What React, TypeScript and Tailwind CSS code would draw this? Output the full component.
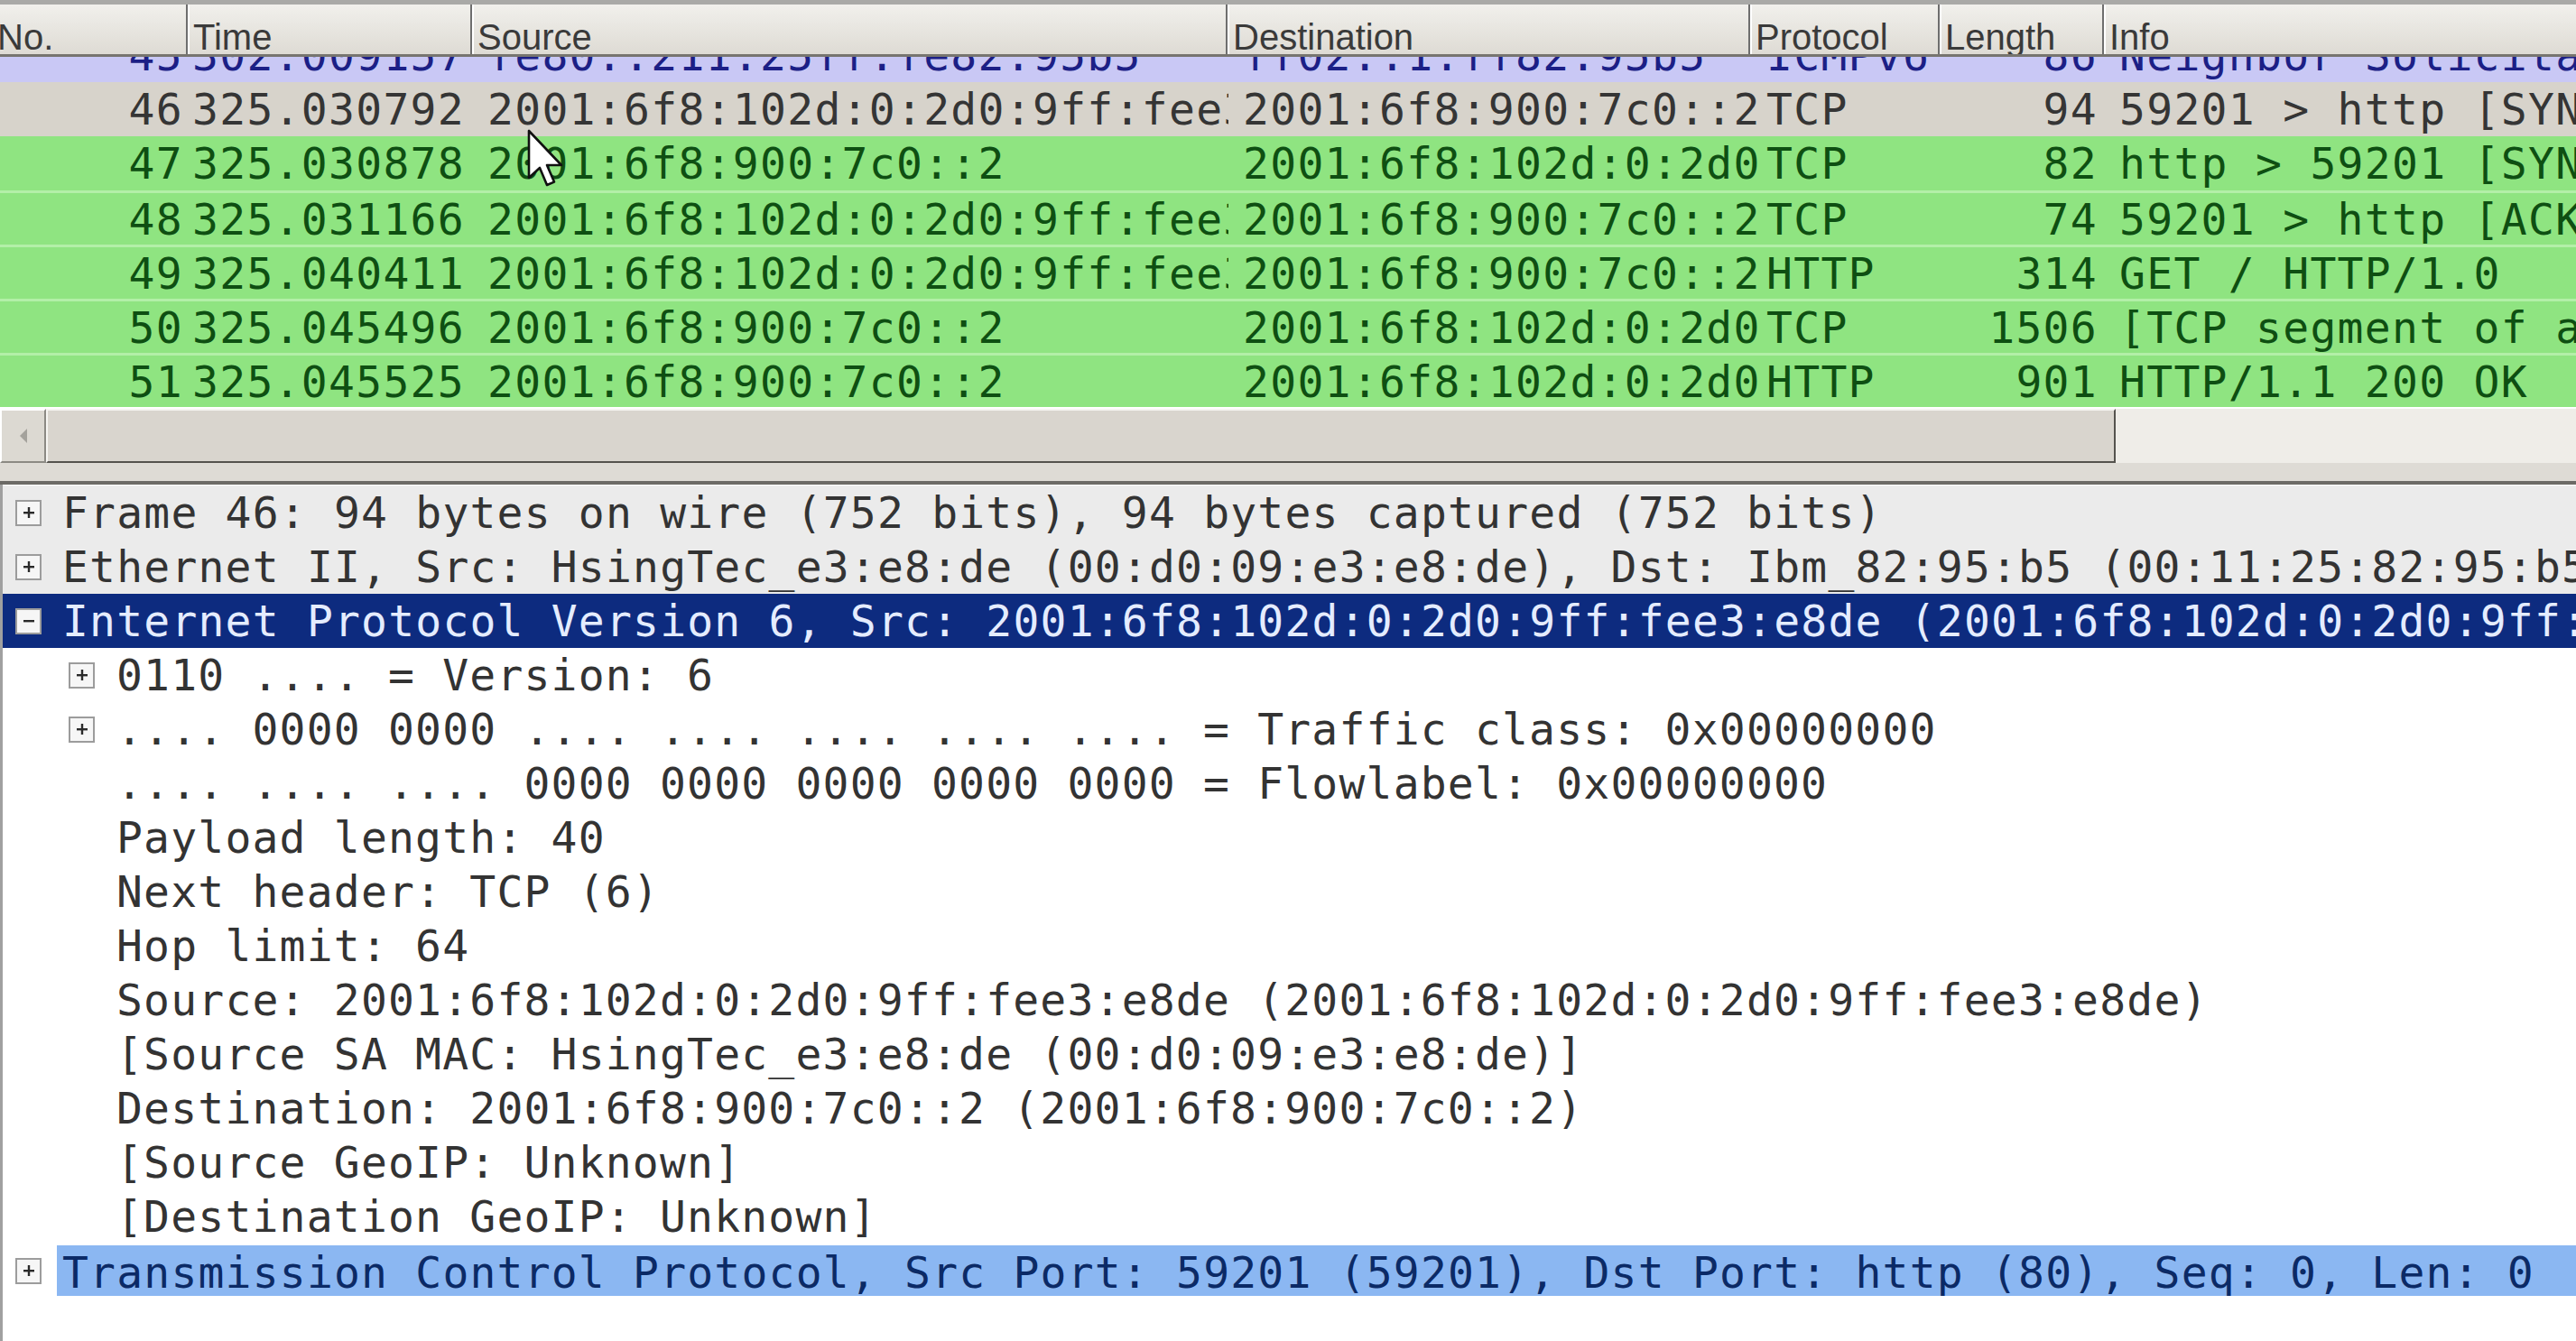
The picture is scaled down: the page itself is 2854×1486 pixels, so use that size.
import React from "react";

type Row = {
  no: string;
  time: string;
  src: string;
  dst: string;
  proto: string;
  len: string;
  info: string;
  kind: "lav" | "sel" | "green";
  sep?: boolean;
};

const rows: Row[] = [
  { no: "45", time: "302.009157", src: "fe80::211:25ff:fe82:95b5", dst: "ff02::1:ff82:95b5", proto: "ICMPv6", len: "86", info: "Neighbor Solicitation for 2001:6f8:900:7c0::2", kind: "lav" },
  { no: "46", time: "325.030792", src: "2001:6f8:102d:0:2d0:9ff:fee3:e8de", dst: "2001:6f8:900:7c0::2", proto: "TCP", len: "94", info: "59201 > http [SYN] Seq=0 Win=5760 Len=0 MSS=1440", kind: "sel" },
  { no: "47", time: "325.030878", src: "2001:6f8:900:7c0::2", dst: "2001:6f8:102d:0:2d0:9ff:fee3:e8de", proto: "TCP", len: "82", info: "http > 59201 [SYN, ACK] Seq=0 Ack=1 Win=5712", kind: "green" },
  { no: "48", time: "325.031166", src: "2001:6f8:102d:0:2d0:9ff:fee3:e8de", dst: "2001:6f8:900:7c0::2", proto: "TCP", len: "74", info: "59201 > http [ACK] Seq=1 Ack=1 Win=5760 Len=0", kind: "green", sep: true },
  { no: "49", time: "325.040411", src: "2001:6f8:102d:0:2d0:9ff:fee3:e8de", dst: "2001:6f8:900:7c0::2", proto: "HTTP", len: "314", info: "GET / HTTP/1.0", kind: "green", sep: true },
  { no: "50", time: "325.045496", src: "2001:6f8:900:7c0::2", dst: "2001:6f8:102d:0:2d0:9ff:fee3:e8de", proto: "TCP", len: "1506", info: "[TCP segment of a reassembled PDU]", kind: "green", sep: true },
  { no: "51", time: "325.045525", src: "2001:6f8:900:7c0::2", dst: "2001:6f8:102d:0:2d0:9ff:fee3:e8de", proto: "HTTP", len: "901", info: "HTTP/1.1 200 OK", kind: "green", sep: true },
];

const mono = { fontFamily: '"DejaVu Sans Mono", "Liberation Mono", monospace' };

function PacketRow({ r }: { r: Row }) {
  const bg =
    r.kind === "lav"
      ? "bg-[#c9c8f5] text-[#1c1f86]"
      : r.kind === "sel"
      ? "bg-[#d7d3cb] text-[#353535]"
      : "bg-[#8fe481] text-[#0e4f12]";
  return (
    <div
      className={`flex h-[60px] shrink-0 items-center whitespace-nowrap text-[48px] leading-[60px] tracking-[1.3px] ${bg} ${
        r.sep ? "border-t-[3px] border-[#b3efa8]" : ""
      }`}
      style={mono}
    >
      <div className="w-[209px] shrink-0 overflow-hidden pr-[6px] text-right">{r.no}</div>
      <div className="w-[315px] shrink-0 overflow-hidden pl-[4px]">{r.time}</div>
      <div className="w-[837px] shrink-0 overflow-hidden pl-[16px]">{r.src}</div>
      <div className="w-[592px] shrink-0 overflow-hidden pl-[16px]">{r.dst}</div>
      <div className="w-[197px] shrink-0 overflow-hidden pl-[4px]">{r.proto}</div>
      <div className="w-[182px] shrink-0 overflow-hidden pr-[8px] text-right">{r.len}</div>
      <div className="flex-1 overflow-hidden pl-[16px]">{r.info}</div>
    </div>
  );
}

function HeaderCell({ label, w, first }: { label: string; w: string; first?: boolean }) {
  return (
    <div
      className={`${w} shrink-0 h-full overflow-hidden whitespace-nowrap pt-[16px] text-[40px] leading-[40px] text-[#3a3a3a] ${
        first ? "-ml-[3px]" : "border-l-2 border-[#6e6e6e] pl-[6px] shadow-[inset_2px_0_0_#ffffff]"
      }`}
      style={{ fontFamily: '"Liberation Sans", Arial, sans-serif' }}
    >
      {label}
    </div>
  );
}

function Box({ minus }: { minus?: boolean }) {
  return (
    <div className="flex h-[29px] w-[29px] items-center justify-center border-2 border-[#9c9c9c] bg-[#f6f6f6]">
      <svg width="16" height="16" viewBox="0 0 16 16">
        <rect x="2" y="7" width="12" height="2.4" fill="#2a2a2a" />
        {!minus && <rect x="6.8" y="2" width="2.4" height="12" fill="#2a2a2a" />}
      </svg>
    </div>
  );
}

type D = { text: string; level: 0 | 1; box?: "plus" | "minus"; style?: "gray" | "sel" | "hl" };

const details: D[] = [
  { text: "Frame 46: 94 bytes on wire (752 bits), 94 bytes captured (752 bits)", level: 0, box: "plus", style: "gray" },
  { text: "Ethernet II, Src: HsingTec_e3:e8:de (00:d0:09:e3:e8:de), Dst: Ibm_82:95:b5 (00:11:25:82:95:b5)", level: 0, box: "plus", style: "gray" },
  { text: "Internet Protocol Version 6, Src: 2001:6f8:102d:0:2d0:9ff:fee3:e8de (2001:6f8:102d:0:2d0:9ff:fee3:e8de), Dst: 2001:6f8:900:7c0::2 (2001:6f8:900:7c0::2)", level: 0, box: "minus", style: "sel" },
  { text: "0110 .... = Version: 6", level: 1, box: "plus" },
  { text: ".... 0000 0000 .... .... .... .... .... = Traffic class: 0x00000000", level: 1, box: "plus" },
  { text: ".... .... .... 0000 0000 0000 0000 0000 = Flowlabel: 0x00000000", level: 1 },
  { text: "Payload length: 40", level: 1 },
  { text: "Next header: TCP (6)", level: 1 },
  { text: "Hop limit: 64", level: 1 },
  { text: "Source: 2001:6f8:102d:0:2d0:9ff:fee3:e8de (2001:6f8:102d:0:2d0:9ff:fee3:e8de)", level: 1 },
  { text: "[Source SA MAC: HsingTec_e3:e8:de (00:d0:09:e3:e8:de)]", level: 1 },
  { text: "Destination: 2001:6f8:900:7c0::2 (2001:6f8:900:7c0::2)", level: 1 },
  { text: "[Source GeoIP: Unknown]", level: 1 },
  { text: "[Destination GeoIP: Unknown]", level: 1 },
  { text: "Transmission Control Protocol, Src Port: 59201 (59201), Dst Port: http (80), Seq: 0, Len: 0", level: 0, box: "plus", style: "hl" },
];

function DetailRow({ d }: { d: D }) {
  const rowBg = d.style === "sel" ? "bg-[#0d2b7f]" : d.style === "gray" ? "bg-[#ebebeb]" : "";
  const textCls =
    d.style === "sel"
      ? "text-[#e4ecff]"
      : d.style === "hl"
      ? "bg-[#8bb7f2] text-[#0b2a66] pl-[6px] h-[56px] leading-[56px]"
      : "text-[#333333]";
  return (
    <div className={`flex h-[60px] shrink-0 items-center whitespace-nowrap ${rowBg}`}>
      <div className={`${d.level === 0 ? "w-[60px] pl-[14px]" : "w-[126px] pl-[73px]"} flex shrink-0 items-center`}>
        {d.box && <Box minus={d.box === "minus"} />}
      </div>
      <div
        className={`flex-1 overflow-hidden text-[48px] leading-[60px] tracking-[1.2px] ${d.level === 0 && d.style !== "hl" ? "pl-[6px]" : ""} ${textCls}`}
        style={mono}
      >
        {d.text}
      </div>
    </div>
  );
}

export default function App() {
  return (
    <div className="relative flex h-[1486px] w-[2854px] flex-col overflow-hidden bg-white">
      {/* column header */}
      <div className="flex h-[63px] shrink-0 flex-col">
        <div className="h-[5px] bg-[#a9a9a7]" />
        <div className="flex h-[55px] bg-gradient-to-b from-[#f1f0ec] to-[#dedbd4]">
          <HeaderCell label="No." w="w-[209px]" first />
          <HeaderCell label="Time" w="w-[315px]" />
          <HeaderCell label="Source" w="w-[837px]" />
          <HeaderCell label="Destination" w="w-[579px]" />
          <HeaderCell label="Protocol" w="w-[210px]" />
          <HeaderCell label="Length" w="w-[182px]" />
          <HeaderCell label="Info" w="flex-1" />
        </div>
        <div className="h-[3px] bg-[#77756f]" />
      </div>

      {/* packet list */}
      <div className="h-[390px] shrink-0 overflow-hidden bg-white">
        <div className="-mt-[32px] flex flex-col">
          {rows.map((r) => (
            <PacketRow key={r.no} r={r} />
          ))}
        </div>
      </div>

      {/* horizontal scrollbar */}
      <div className="flex h-[60px] shrink-0 bg-[#efede8]">
        <div className="flex h-full w-[51px] shrink-0 items-center justify-center border-2 border-t-white border-l-white border-r-[#8c8a84] border-b-[#8c8a84] bg-[#dcd9d2]">
          <svg width="12" height="18" viewBox="0 0 12 18">
            <polygon points="10,1 2,9 10,17" fill="#a4a29c" />
          </svg>
        </div>
        <div className="h-full w-[2293px] shrink-0 border-2 border-t-[#f6f5f2] border-l-[#f6f5f2] border-r-[#55534e] border-b-[#55534e] bg-[#d9d5ce]" />
        <div className="flex-1" />
      </div>

      {/* splitter */}
      <div className="flex h-[24px] shrink-0 flex-col bg-[#dedbd5]">
        <div className="flex-1" />
        <div className="h-[4px] bg-[#6c6a66]" />
      </div>

      {/* details */}
      <div className="flex flex-1 flex-col border-l-[3px] border-[#a0a0a0] bg-white pt-px">
        {details.map((d, i) => (
          <DetailRow key={i} d={d} />
        ))}
      </div>

      {/* mouse pointer */}
      <svg className="absolute left-[584px] top-[143px]" width="46" height="70" viewBox="0 0 23 35">
        <path d="M1 1 L1 27 L7 21.5 L11 31 L15 29.3 L11 20 L19 20 Z" fill="#ffffff" stroke="#111111" strokeWidth="1.3" strokeLinejoin="round" />
      </svg>
    </div>
  );
}
